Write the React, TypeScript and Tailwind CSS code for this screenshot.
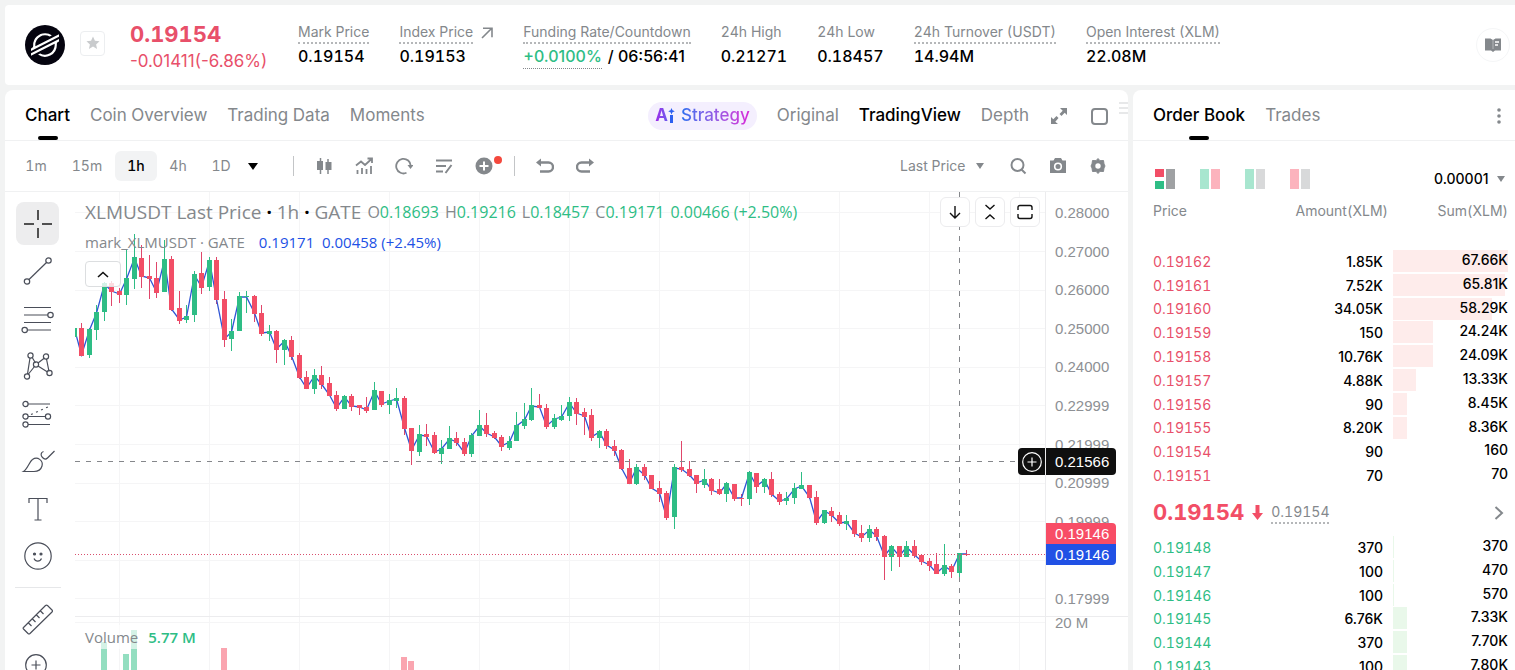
import React from "react";
import { SiStellar } from "react-icons/si";

type Candle = [string, number, number, number, number];

// [direction, body top, body bottom, wick top, wick bottom]
const candles: Candle[] = [
  ["g", 138, 147, 138, 147], ["r", 138, 166, 133, 166], ["g", 139, 165, 138, 168], ["g", 122, 140, 115, 150],
  ["g", 93, 122, 92, 131], ["r", 93, 102, 91, 116], ["r", 101, 105, 98, 113], ["g", 88, 105, 59, 115],
  ["g", 67, 89, 44, 99], ["r", 68, 87, 55, 98], ["r", 86, 89, 65, 109], ["r", 88, 103, 72, 108],
  ["g", 69, 102, 50, 102], ["r", 69, 120, 66, 121], ["r", 118, 131, 101, 134], ["g", 126, 130, 115, 133],
  ["g", 84, 125, 81, 132], ["r", 83, 98, 62, 104], ["g", 70, 97, 67, 101], ["r", 70, 110, 67, 114],
  ["r", 109, 150, 101, 157], ["g", 141, 149, 129, 161], ["g", 106, 141, 102, 141], ["g", 106, 107, 101, 123],
  ["r", 106, 124, 105, 132], ["r", 123, 144, 115, 146], ["g", 141, 144, 135, 151], ["r", 141, 160, 140, 173],
  ["g", 150, 160, 149, 175], ["r", 150, 167, 146, 170], ["r", 165, 188, 163, 189], ["r", 187, 199, 181, 199],
  ["g", 185, 199, 179, 204], ["r", 185, 195, 176, 199], ["r", 193, 206, 187, 206], ["r", 205, 219, 201, 221],
  ["g", 206, 219, 205, 219], ["r", 206, 217, 204, 221], ["r", 215, 218, 215, 225], ["r", 217, 221, 207, 223],
  ["g", 200, 220, 192, 220], ["r", 201, 215, 201, 217], ["g", 210, 215, 204, 224], ["g", 208, 211, 198, 218],
  ["r", 208, 239, 206, 245], ["r", 238, 261, 238, 275], ["g", 244, 262, 235, 266], ["r", 244, 247, 234, 256],
  ["r", 245, 263, 242, 264], ["g", 258, 264, 250, 274], ["g", 248, 259, 236, 259], ["r", 248, 253, 242, 256],
  ["r", 252, 264, 248, 266], ["g", 245, 264, 243, 267], ["g", 235, 246, 220, 246], ["r", 235, 244, 223, 247],
  ["r", 243, 248, 241, 249], ["r", 247, 257, 245, 261], ["g", 251, 258, 246, 260], ["g", 235, 251, 222, 251],
  ["g", 229, 236, 213, 239], ["g", 215, 230, 198, 231], ["r", 215, 218, 204, 218], ["r", 218, 237, 214, 239],
  ["g", 228, 237, 224, 239], ["g", 226, 230, 215, 231], ["g", 212, 226, 207, 231], ["r", 212, 224, 208, 235],
  ["r", 222, 227, 218, 245], ["r", 225, 248, 219, 251], ["g", 241, 248, 240, 258], ["r", 241, 256, 239, 259],
  ["r", 256, 261, 250, 266], ["r", 260, 279, 259, 280], ["r", 278, 294, 269, 294], ["g", 277, 294, 274, 295],
  ["r", 277, 286, 274, 290], ["r", 285, 299, 285, 299], ["r", 298, 304, 291, 312], ["r", 303, 328, 301, 330],
  ["g", 277, 327, 274, 339], ["r", 277, 280, 251, 282], ["r", 279, 286, 271, 287], ["r", 285, 294, 285, 303],
  ["g", 289, 295, 279, 298], ["r", 289, 301, 288, 305], ["r", 299, 304, 289, 305], ["g", 293, 304, 292, 312],
  ["r", 294, 309, 294, 311], ["r", 308, 309, 304, 316], ["g", 282, 309, 281, 315], ["r", 283, 297, 283, 303],
  ["g", 289, 297, 288, 303], ["r", 289, 305, 282, 307], ["r", 304, 312, 302, 315], ["g", 308, 311, 302, 315],
  ["g", 298, 308, 293, 314], ["g", 295, 299, 282, 299], ["r", 295, 308, 295, 309], ["r", 307, 333, 301, 335],
  ["g", 320, 333, 320, 334], ["r", 321, 326, 317, 332], ["r", 325, 334, 322, 336], ["g", 331, 334, 325, 340],
  ["r", 330, 344, 330, 347], ["r", 343, 348, 335, 352], ["g", 339, 348, 335, 352], ["r", 339, 347, 337, 351],
  ["r", 346, 367, 345, 390], ["g", 356, 367, 355, 381], ["r", 356, 367, 356, 377], ["g", 356, 367, 351, 367],
  ["r", 356, 366, 350, 368], ["r", 365, 372, 364, 375], ["r", 371, 376, 368, 381], ["r", 374, 384, 363, 384],
  ["g", 375, 384, 354, 386], ["r", 376, 382, 374, 388], ["g", 363, 383, 363, 389], ["r", 364, 365, 360, 366],
];

const volumes = [
  { x: 26, y: 450, up: true },
  { x: 48, y: 462, up: true },
  { x: 56, y: 438, up: true },
  { x: 146, y: 456, up: false },
  { x: 326, y: 465, up: false },
  { x: 333, y: 469, up: false },
];

const axisLabels = [
  { label: "0.28000", y: 20 },
  { label: "0.27000", y: 59 },
  { label: "0.26000", y: 97 },
  { label: "0.25000", y: 136 },
  { label: "0.24000", y: 174 },
  { label: "0.22999", y: 213 },
  { label: "0.21999", y: 252 },
  { label: "0.20999", y: 290 },
  { label: "0.19999", y: 329 },
  { label: "0.17999", y: 406 },
];

const gridY = [20, 59, 98, 136, 175, 213, 252, 291, 329, 368, 406, 430];
const gridX = [44, 134, 224, 314, 404, 494, 584, 674, 764, 854, 944];

const asks = [
  { price: "0.19162", amount: "1.85K", sum: "67.66K", depth: 100 },
  { price: "0.19161", amount: "7.52K", sum: "65.81K", depth: 97 },
  { price: "0.19160", amount: "34.05K", sum: "58.29K", depth: 86 },
  { price: "0.19159", amount: "150", sum: "24.24K", depth: 35 },
  { price: "0.19158", amount: "10.76K", sum: "24.09K", depth: 35 },
  { price: "0.19157", amount: "4.88K", sum: "13.33K", depth: 20 },
  { price: "0.19156", amount: "90", sum: "8.45K", depth: 12 },
  { price: "0.19155", amount: "8.20K", sum: "8.36K", depth: 12 },
  { price: "0.19154", amount: "90", sum: "160", depth: 0 },
  { price: "0.19151", amount: "70", sum: "70", depth: 0 },
];

const bids = [
  { price: "0.19148", amount: "370", sum: "370", depth: 1 },
  { price: "0.19147", amount: "100", sum: "470", depth: 1 },
  { price: "0.19146", amount: "100", sum: "570", depth: 1 },
  { price: "0.19145", amount: "6.76K", sum: "7.33K", depth: 12 },
  { price: "0.19144", amount: "370", sum: "7.70K", depth: 12 },
  { price: "0.19143", amount: "100", sum: "7.80K", depth: 12 },
];

const Stat = ({
  label,
  value,
  dotted,
  children,
}: {
  label: string;
  value?: string;
  dotted?: boolean;
  children?: React.ReactNode;
}) => (
  <div className="flex shrink-0 flex-col pb-0.5">
    <div className="flex h-6 items-center gap-2 text-sm text-[#84888c]">
      <span
        className={
          dotted
            ? "border-b-2 border-dotted border-[#b5b7b9] leading-5"
            : "border-b-2 border-transparent leading-5"
        }
      >
        {label}
      </span>
      {label === "Index Price" && (
        <svg width="12" height="12" viewBox="0 0 12 12" fill="none" stroke="#84888c" strokeWidth="1.6">
          <path d="M1 11L10.5 1.5M2 1.2h9v9" />
        </svg>
      )}
    </div>
    <div className="text-base font-medium leading-[22px] text-black">{value ?? children}</div>
  </div>
);

const Header = () => (
  <header className="flex h-20 shrink-0 items-center overflow-hidden rounded-l bg-white pl-5 pr-[5px]">
    <div className="flex size-10 shrink-0 items-center justify-center rounded-full bg-[#05040f]">
      <SiStellar className="size-7 text-white" />
    </div>
    <button
      aria-label="Add to favorites"
      className="mb-1 ml-[15px] flex size-[25px] shrink-0 items-center justify-center rounded border border-[#eceef0]"
    >
      <svg width="14" height="14" viewBox="0 0 24 24" fill="#c9cbcd">
        <path d="M12 1l3.3 7.3 7.9.8-5.9 5.3 1.7 7.8L12 18.1l-7 4.1 1.7-7.8L.8 9.1l7.9-.8z" />
      </svg>
    </button>
    <div className="ml-[25px] w-[138px] shrink-0 pt-1 text-[#e8506a]">
      <div className="text-[22px] font-bold leading-7">0.19154</div>
      <div className="text-[17px] leading-[26px] proportional-nums">-0.01411(-6.86%)</div>
    </div>
    <div className="ml-[30px] flex items-center gap-[30px]">
      <Stat label="Mark Price" value="0.19154" dotted />
      <Stat label="Index Price" value="0.19153" dotted />
      <Stat label="Funding Rate/Countdown" dotted>
        <span className="proportional-nums">
          <span className="border-b border-dotted border-[#84888c] pb-0.5 text-[#2ebd85]">+0.0100%</span>
          <span className="ml-1.5">/ 06:56:41</span>
        </span>
      </Stat>
      <Stat label="24h High" value="0.21271" />
      <Stat label="24h Low" value="0.18457" />
      <Stat label="24h Turnover (USDT)" value="14.94M" dotted />
      <Stat label="Open Interest (XLM)" value="22.08M" dotted />
    </div>
    <button
      aria-label="Guide"
      className="ml-auto flex size-[34px] shrink-0 items-center justify-center rounded-full border border-[#f5f6f7]"
    >
      <svg width="16" height="16" viewBox="0 0 16 16">
        <path d="M0 1.5h5.500L8 3v12l-2-1.500H0zM16 1.500h-5.500L8 3v12l2-1.500h6z" fill="#84888c" />
        <path d="M10 5h4M10 8h3" stroke="#fff" strokeWidth="1.3" />
        <path d="M8 3v9" stroke="#c3c5c7" strokeWidth="0.8" />
      </svg>
    </button>
  </header>
);

const ChartTabs = () => (
  <nav className="flex h-[51px] shrink-0 items-center border-b border-[#f0f1f2] pl-5 pt-0.5 text-[17px] text-[#84888c]">
    <div className="flex h-full items-center gap-5">
      <button className="relative h-full font-medium text-black">
        Chart
        <span className="absolute bottom-0 left-1/2 h-1 w-5 -translate-x-1/2 rounded-sm bg-black" />
      </button>
      <button>Coin Overview</button>
      <button>Trading Data</button>
      <button>Moments</button>
    </div>
    <div className="ml-auto flex h-full items-center gap-5">
      <button className="flex h-7 items-center gap-1.5 rounded-full bg-[#f4effe] px-[7px]">
        <span className="flex items-center bg-gradient-to-r from-[#a020e8] to-[#2f6bf0] bg-clip-text font-bold text-transparent">
          A
          <svg width="7" height="16" viewBox="0 0 7 16" fill="#2d5ff0">
            <path d="M2 7h3v8H2zM3.500 0l1 2.200 2.300 1-2.300 1-1 2.200-1-2.200-2.300-1 2.300-1z" />
          </svg>
        </span>
        <span className="bg-gradient-to-r from-[#1f6ef0] to-[#d822d8] bg-clip-text font-medium text-transparent">
          Strategy
        </span>
      </button>
      <button>Original</button>
      <button className="font-medium text-black">TradingView</button>
      <button>Depth</button>
      <button aria-label="Fullscreen" className="flex w-5 justify-center">
        <svg width="16" height="16" viewBox="0 0 16 16" fill="#84888c">
          <path d="M9 0h7v7l-2.300-2.300L10.500 8 8.500 6l3.200-3.300zM0 9l2.300 2.300L5.500 8l2 2-3.200 3.700L7 16H0z" />
        </svg>
      </button>
      <button aria-label="Layout" className="flex w-5 justify-center">
        <span className="size-[17px] rounded-sm border-2 border-[#84888c]" />
      </button>
      <svg className="mb-4 -ml-2.5" width="9" height="12" viewBox="0 0 9 12" stroke="#cfd1d3">
        <path d="M0 1h9M0 6h9M0 11h9" />
      </svg>
    </div>
  </nav>
);

const ToolIcon = ({ label, children }: { label: string; children: React.ReactNode }) => (
  <button aria-label={label} className="flex size-5 shrink-0 items-center justify-center">
    <svg width="18" height="18" viewBox="0 0 18 18" fill="none" stroke="#84888c" strokeWidth="2">
      {children}
    </svg>
  </button>
);

const Toolbar = () => (
  <div className="flex h-[51px] shrink-0 items-center justify-between border-b border-[#f0f1f2] pl-2.5 pr-5 text-sm text-[#84888c]">
    <div className="flex items-center">
      <button className="w-[42px]">1m</button>
      <button className="ml-[9px] w-[42px]">15m</button>
      <button className="ml-[7px] h-[30px] w-[42px] rounded-md bg-[#f2f3f4] font-medium text-black">1h</button>
      <button className="w-[42px]">4h</button>
      <button className="w-11">1D</button>
      <button aria-label="More intervals" className="flex w-5 justify-center">
        <svg width="10" height="7" viewBox="0 0 10 7">
          <path d="M0 0h10L5 7z" />
        </svg>
      </button>
      <span className="ml-[30px] h-5 w-px bg-[#c3c5c7]" />
      <div className="ml-5 flex items-center gap-5">
        <ToolIcon label="Candle style">
          <path d="M5.500 1v16M13 2v15" strokeWidth="1.500" />
          <path d="M2 4h6v9H2zM10.500 5h6v8h-6z" fill="#84888c" stroke="none" />
        </ToolIcon>
        <ToolIcon label="Indicators">
          <path d="M1 8.500l5-4 4 3.500 6.500-6M12.500 1.500H17V6" strokeWidth="1.800" />
          <path d="M2.500 13v4M7 11v6M11.500 12v5M16 9v8" strokeWidth="1.800" />
        </ToolIcon>
        <ToolIcon label="Replay">
          <path d="M11.500 15.800A7.300 7.300 0 1 1 15.800 9" strokeWidth="1.800" />
          <path d="M12.500 8h6l-3 4z" fill="#84888c" stroke="none" />
        </ToolIcon>
        <ToolIcon label="Order list">
          <path d="M1 3.500h16M1 9h10M1 14.500h7M10.500 16L16.500 8" />
        </ToolIcon>
        <div className="relative flex">
          <ToolIcon label="Add">
            <circle cx="9" cy="9" r="8.500" fill="#84888c" stroke="none" />
            <path d="M9 4.500v9M4.500 9h9" stroke="#fff" />
          </ToolIcon>
          <span className="absolute -right-2 top-0 size-2 rounded-full bg-[#f4483d]" />
        </div>
      </div>
      <span className="ml-5 h-5 w-px bg-[#c3c5c7]" />
      <div className="ml-5 flex items-center gap-5">
        <ToolIcon label="Undo">
          <path d="M3 5.500h9.500a4 4 0 0 1 0 9H4" strokeWidth="2.400" />
          <path d="M0 5.500L5 1.500v8z" fill="#84888c" stroke="none" />
        </ToolIcon>
        <ToolIcon label="Redo">
          <path d="M15 5.500H5.500a4 4 0 0 0 0 9H14" strokeWidth="2.400" />
          <path d="M18 5.500l-5-4v8z" fill="#84888c" stroke="none" />
        </ToolIcon>
      </div>
    </div>
    <div className="flex items-center gap-5">
      <label className="mr-1 flex items-center gap-1">
        <select aria-label="Price type" className="appearance-none bg-transparent outline-none">
          <option>Last Price</option>
          <option>Mark Price</option>
        </select>
        <svg width="8" height="6" viewBox="0 0 8 6" fill="#84888c">
          <path d="M0 0h8L4 6z" />
        </svg>
      </label>
      <ToolIcon label="Search">
        <circle cx="8.500" cy="8" r="6" />
        <path d="M12.500 12.500l4 4" />
      </ToolIcon>
      <ToolIcon label="Snapshot">
        <path d="M6 1h6l1.500 2.500H17V16H1V3.500h3.500z" fill="#84888c" stroke="none" />
        <circle cx="9" cy="9.500" r="3.300" stroke="#fff" strokeWidth="1.600" />
      </ToolIcon>
      <ToolIcon label="Settings">
        <path
          d="M9 1.500l2 2.200 3.500-.2.500 3.500L16 9l-1 2-.5 3.500-3.500-.2L9 16.500l-2-2.200-3.500.2L3 11 2 9l1-2 .5-3.500 3.500.2z"
          fill="#84888c"
          strokeWidth="1"
          strokeLinejoin="round"
        />
        <circle cx="9" cy="9" r="2.700" fill="#fff" stroke="none" />
      </ToolIcon>
    </div>
  </div>
);

const drawingTools = [
  {
    name: "Crosshair",
    icon: <path d="M16 2v10M16 20v10M2 16h10M20 16h10" strokeWidth="1.500" stroke="#1c1c1c" />,
  },
  {
    name: "Trend line",
    icon: (
      <>
        <circle cx="26.500" cy="5.500" r="2.700" />
        <circle cx="5" cy="26.500" r="2.700" />
        <path d="M7 24.500L24.500 7.500" />
      </>
    ),
  },
  {
    name: "Fib retracement",
    icon: (
      <>
        <path d="M2 4.500h27M2 12h24M2 19.500h27M5.500 27H29" />
        <circle cx="28.500" cy="12" r="2.700" />
        <circle cx="2.700" cy="27" r="2.700" />
      </>
    ),
  },
  {
    name: "Patterns",
    icon: (
      <>
        <path d="M8 8L5.500 24M10.500 8l3 5M16 13l6.500-5M24.500 9l2.500 12.500M6.500 24l6-7.500M16 16l9.500 6" />
        <circle cx="8.500" cy="5.500" r="2.600" />
        <circle cx="24" cy="6.500" r="2.600" />
        <circle cx="14" cy="14.500" r="2.600" />
        <circle cx="5" cy="26.500" r="2.600" />
        <circle cx="27.500" cy="23" r="2.600" />
      </>
    ),
  },
  {
    name: "Projection",
    icon: (
      <>
        <path d="M6 6h22M6 18.500h17M6 26.500h22" />
        <path d="M9 16.500L28 8" strokeDasharray="2 3.500" />
        <circle cx="3.500" cy="6" r="2.600" />
        <circle cx="3.500" cy="18.500" r="2.600" />
        <circle cx="26" cy="18.500" r="2.600" />
        <circle cx="3.500" cy="26.500" r="2.600" />
      </>
    ),
  },
  {
    name: "Brush",
    icon: (
      <path d="M1.500 26.500c4-2.500 6-10 9-12 5-3.500 11 1 9.500 6.500-1 3.500-4 5.500-8 5.500zM21.500 6.500c-3 1-3 4-1 6s3.500 2 5 .5l7-7" />
    ),
  },
  {
    name: "Text",
    icon: <path d="M7 10V5.500h18V10M16 5.500V27M12.500 27h7" />,
  },
  {
    name: "Emoji",
    icon: (
      <>
        <circle cx="16" cy="16" r="13.200" />
        <path d="M12 18.500c1.500 3.500 6 3.500 7.500 0" />
        <circle cx="12.500" cy="14" r="1" fill="#4a4e59" />
        <circle cx="19" cy="14" r="1" fill="#4a4e59" />
      </>
    ),
  },
];

const DrawingTools = () => (
  <aside className="flex w-[70px] shrink-0 flex-col items-center overflow-hidden pr-[5px] pt-2.5">
    <div className="flex h-[376px] shrink-0 flex-col justify-between">
      {drawingTools.map((tool) => (
        <button
          key={tool.name}
          aria-label={tool.name}
          className={
            tool.name === "Crosshair"
              ? "flex size-[43px] items-center justify-center rounded-lg bg-[#ededee]"
              : "flex size-[43px] items-center justify-center"
          }
        >
          <svg className="overflow-visible" width="32" height="32" viewBox="0 0 32 32" fill="none" stroke="#4a4e59" strokeWidth="1.200">
            {tool.icon}
          </svg>
        </button>
      ))}
    </div>
    <hr className="my-[9px] w-[46px] border-[#e6e7e9]" />
    <button aria-label="Measure" className="flex size-[43px] shrink-0 items-center justify-center">
      <svg width="32" height="32" viewBox="0 0 32 32" fill="none" stroke="#4a4e59" strokeWidth="1.200">
        <path d="M1.500 24.500L23.500 2.500q1-.8 2 0l4.500 4.500q1 1 0 2L8 30.500q-1 .8-2 0L1.500 26q-.8-.8 0-1.500zM6.500 20l3 3M10.500 16l3 3M14.500 12l3 3M18.500 8l3 3" />
      </svg>
    </button>
    <button aria-label="Zoom in" className="flex size-[43px] shrink-0 items-center justify-center">
      <svg width="32" height="32" viewBox="0 0 32 32" fill="none" stroke="#4a4e59" strokeWidth="1.200">
        <circle cx="14" cy="19" r="10.300" />
        <path d="M14 14.500v9M9.500 19h9M22 26l6 6" />
      </svg>
    </button>
  </aside>
);

const candleX = (i: number) => Math.floor(i * 7.5 - 1);

// green candles close at the body top, red ones at the bottom
const closeLine = candles
  .map(([dir, top, bottom], i) => `${candleX(i) + 0.5},${dir === "g" ? top - 1 : bottom - 3}`)
  .join(" ");

const PricePlot = () => (
  <svg className="absolute inset-0 h-full w-full" shapeRendering="crispEdges">
    <g stroke="#f5f5f6">
      {gridY.map((y) => (
        <line key={y} x1="0" x2="100%" y1={y + 0.5} y2={y + 0.5} />
      ))}
      {gridX.map((x) => (
        <line key={x} x1={x + 0.5} x2={x + 0.5} y1="0" y2="100%" />
      ))}
    </g>
    <line x1="0" x2="100%" y1="424.5" y2="424.5" stroke="#ececee" />
    {volumes.map((v) => (
      <rect key={v.x} x={v.x} y={v.y} width="6" height="200" fill={v.up ? "#93dec0" : "#faa5b0"} />
    ))}
    {candles.map(([dir, , , high, low], i) => (
      <rect
        key={i}
        x={candleX(i)}
        y={high - 2}
        width="1"
        height={low - high}
        fill={dir === "g" ? "#2ebd85" : "#e0466a"}
      />
    ))}
    <polyline
      points={closeLine}
      fill="none"
      stroke="#2f55d4"
      strokeWidth="1.300"
      shapeRendering="geometricPrecision"
    />
    {/* bodies come last, so that the line only shows between them */}
    {candles.map(([dir, top, bottom], i) => (
      <rect
        key={i}
        x={candleX(i) - 2}
        y={top - 2}
        width="5"
        height={bottom - top}
        fill={dir === "g" ? "#2ebd85" : "#f24e66"}
      />
    ))}
    <line x1="0" x2="100%" y1="362.5" y2="362.5" stroke="#d9506e" strokeDasharray="1 2" />
    <line x1="0" x2="100%" y1="269.5" y2="269.5" stroke="#85878b" strokeDasharray="5 6" />
    <line x1="884.5" x2="884.5" y1="0" y2="100%" stroke="#85878b" strokeDasharray="5 6" />
  </svg>
);

const Ohlc = ({ name, value }: { name: string; value: string }) => (
  <span className="text-[#84888c]">
    {name}
    <span className="text-[#2ebd85]">{value}</span>
  </span>
);

const ChartButton = ({ label, children }: { label: string; children: React.ReactNode }) => (
  <button
    aria-label={label}
    className="flex size-[30px] items-center justify-center rounded-md border border-[#ececee] bg-white"
  >
    <svg width="16" height="16" viewBox="0 0 16 16" fill="none" stroke="#111" strokeWidth="1.400">
      {children}
    </svg>
  </button>
);

const ChartArea = () => (
  <div className="flex min-h-0 flex-1">
    <DrawingTools />
    <div className="relative min-w-0 flex-1 overflow-hidden">
      <PricePlot />
      <div className="absolute left-2.5 top-[7px] font-['Open_Sans',sans-serif] text-[#84888c]">
        <div className="flex items-center gap-1.5 leading-[26px]">
          <h1 className="text-[19px] leading-[26px]">
            XLMUSDT Last Price <b className="text-black">·</b> 1h <b className="text-black">·</b> GATE
          </h1>
          <div className="flex gap-1.5 text-base leading-[26px]">
            <Ohlc name="O" value="0.18693" />
            <Ohlc name="H" value="0.19216" />
            <Ohlc name="L" value="0.18457" />
            <Ohlc name="C" value="0.19171" />
            <span className="text-[#2ebd85]">0.00466 (+2.50%)</span>
          </div>
        </div>
        <div className="mt-1 flex gap-3.5 text-[15px] leading-[26px]">
          <span>mark_XLMUSDT · GATE</span>
          <span className="text-[#2151e5]">0.19171&nbsp; 0.00458 (+2.45%)</span>
        </div>
        <button
          aria-label="Collapse legend"
          className="mt-1.5 flex h-[26px] w-9 items-center justify-center rounded border border-[#dcdee0] bg-white/80"
        >
          <svg width="12" height="7" viewBox="0 0 12 7" fill="none" stroke="#111" strokeWidth="1.600">
            <path d="M1 6l5-4.500L11 6" />
          </svg>
        </button>
      </div>
      <div className="absolute right-[5px] top-[5px] flex gap-[5px]">
        <ChartButton label="Scroll to latest">
          <path d="M8 2v11.500M3 9l5 5 5-5" />
        </ChartButton>
        <ChartButton label="Collapse pane">
          <path d="M3.500 1l4.500 4 4.500-4M3.500 15L8 11l4.500 4" />
        </ChartButton>
        <ChartButton label="Maximize pane">
          <path d="M1 6V3.500Q1 1.500 3 1.500h10q2 0 2 2V6M1 10v2.500q0 2 2 2h10q2 0 2-2V10" />
        </ChartButton>
      </div>
      <div className="absolute left-2.5 top-[433px] flex gap-2.5 bg-white/60 font-['Open_Sans',sans-serif] text-[15px] leading-6 text-[#84888c]">
        <span>Volume</span>
        <span className="font-semibold text-[#2ebd85]">5.77 M</span>
      </div>
      <button
        aria-label="Add alert"
        className="absolute right-0 top-64 flex h-[27px] w-[27px] items-center justify-center rounded-l bg-[#0f0f0f]"
      >
        <svg width="20" height="20" viewBox="0 0 20 20" fill="none" stroke="#fff" strokeWidth="1.200">
          <circle cx="10" cy="10" r="9.300" />
          <path d="M10 5.500v9M5.500 10h9" />
        </svg>
      </button>
    </div>
    <div className="relative w-[83px] shrink-0 overflow-hidden border-l border-[#ececee] font-['Liberation_Sans',sans-serif] text-[15px]">
      <svg className="absolute inset-0 h-full w-full">
        <g fill="#8d9094">
          {axisLabels.map((tick) => (
            <text key={tick.label} x="9" y={tick.y + 6}>
              {tick.label}
            </text>
          ))}
          <text x="9" y="436">20 M</text>
        </g>
        <line x1="0" x2="100%" y1="424.5" y2="424.5" stroke="#ececee" />
      </svg>
      <div className="absolute left-0 top-64 h-[27px] w-[70px] rounded-r bg-[#0f0f0f] pl-[9px] leading-[27px] text-white">
        0.21566
      </div>
      <div className="absolute left-0 top-[331px] h-[21px] w-[70px] rounded-tr bg-[#f84d66] pl-[9px] leading-[21px] text-white">
        0.19146
      </div>
      <div className="absolute left-0 top-[352px] h-[21px] w-[70px] rounded-br bg-[#2151e5] pl-[9px] leading-[21px] text-white">
        0.19146
      </div>
    </div>
  </div>
);

const BookRow = ({ row, side }: { row: (typeof asks)[number]; side: "ask" | "bid" }) => (
  <tr className="proportional-nums">
    <td className={side === "ask" ? "tabular-nums text-[#e8506a]" : "tabular-nums text-[#2ebd85]"}>{row.price}</td>
    <td className="pr-2.5 text-right font-medium text-black">{row.amount}</td>
    <td className="relative w-[115px] text-right align-top font-medium leading-5 text-black">
      <span
        className={side === "ask" ? "absolute left-0 top-0 h-[22px] bg-[#feeceb]" : "absolute left-0 top-0 h-[22px] bg-[#e9f8ea]"}
        style={{ width: `${row.depth}%` }}
      />
      <span className="relative">{row.sum}</span>
    </td>
  </tr>
);

const OrderBook = () => (
  <section className="flex w-[382px] shrink-0 flex-col overflow-hidden rounded-tl-lg bg-white">
    <nav className="flex h-[51px] shrink-0 items-center gap-5 border-b border-[#f0f1f2] pl-5 pr-[11px] pt-0.5 text-[17px] text-[#84888c]">
      <button className="relative h-full font-medium text-black">
        Order Book
        <span className="absolute bottom-0 left-1/2 h-1 w-5 -translate-x-1/2 rounded-sm bg-black" />
      </button>
      <button>Trades</button>
      <button aria-label="More" className="ml-auto">
        <svg width="10" height="18" viewBox="0 0 10 18" fill="#84888c">
          <circle cx="5" cy="3" r="1.800" />
          <circle cx="5" cy="9" r="1.800" />
          <circle cx="5" cy="15" r="1.800" />
        </svg>
      </button>
    </nav>
    <div className="mt-[25px] flex h-[26px] shrink-0 items-center pl-[22px] pr-2.5">
      <div className="flex gap-[25px]">
        <button aria-label="Bids and asks" className="flex gap-0.5">
          <span className="flex flex-col gap-1">
            <span className="h-2 w-[9px] bg-[#f24e66]" />
            <span className="h-2 w-[9px] bg-[#2ebd85]" />
          </span>
          <span className="h-5 w-[9px] bg-[#9fa1a3]" />
        </button>
        <button aria-label="Side by side" className="flex gap-0.5">
          <span className="h-5 w-[9px] bg-[#a8e6cf]" />
          <span className="h-5 w-[9px] bg-[#fcb3bd]" />
        </button>
        <button aria-label="Bids" className="flex gap-0.5">
          <span className="h-5 w-[9px] bg-[#a8e6cf]" />
          <span className="h-5 w-[9px] bg-[#d8d9da]" />
        </button>
        <button aria-label="Asks" className="flex gap-0.5">
          <span className="h-5 w-[9px] bg-[#fcb3bd]" />
          <span className="h-5 w-[9px] bg-[#d8d9da]" />
        </button>
      </div>
      <label className="ml-auto flex items-center gap-2 text-sm font-medium text-black">
        <select
          aria-label="Price precision"
          className="appearance-none bg-transparent outline-none proportional-nums"
        >
          <option>0.00001</option>
          <option>0.0001</option>
        </select>
        <svg width="8" height="6" viewBox="0 0 8 6" fill="#84888c">
          <path d="M0 0h8L4 6z" />
        </svg>
      </label>
    </div>
    <div className="flex flex-col pl-5 pr-[7px] text-sm">
      <table className="mt-[7px] h-[289px] w-full">
        <thead>
          <tr className="h-[51px] align-top leading-6 text-[#84888c]">
            <th className="text-left font-normal">Price</th>
            <th className="pr-[5px] text-right font-normal">Amount(XLM)</th>
            <th className="text-right font-normal">Sum(XLM)</th>
          </tr>
        </thead>
        <tbody>
          {asks.map((row) => (
            <BookRow key={row.price} row={row} side="ask" />
          ))}
        </tbody>
      </table>
      <div className="flex h-12 shrink-0 items-center pt-0.5">
        <span className="text-[22px] font-bold text-[#f24e66]">0.19154</span>
        <svg className="ml-2" width="11" height="16" viewBox="0 0 11 16" fill="#f24e66">
          <path d="M3.500 0h4v8H11l-5.500 7L0 8h3.500z" />
        </svg>
        <span className="ml-2 border-b-2 border-dotted border-[#b5b7b9] leading-5 text-[#84888c]">0.19154</span>
        <button aria-label="Show trades" className="ml-auto mr-1">
          <svg width="10" height="14" viewBox="0 0 10 14" fill="none" stroke="#84888c" strokeWidth="2">
            <path d="M1.500 1l6.500 6-6.500 6" />
          </svg>
        </button>
      </div>
      <table className="h-[143px] w-full">
        <tbody>
          {bids.map((row) => (
            <BookRow key={row.price} row={row} side="bid" />
          ))}
        </tbody>
      </table>
    </div>
  </section>
);

const App = () => {
  return (
    <div className="flex h-screen flex-col gap-[5px] overflow-hidden bg-[#f2f3f3] pl-[5px] pt-[5px] font-['Inter',sans-serif] tabular-nums">
      <Header />
      <main className="flex min-h-0 flex-1 gap-[5px]">
        <section className="flex min-w-0 flex-1 flex-col overflow-hidden rounded-t-lg bg-white">
          <ChartTabs />
          <Toolbar />
          <ChartArea />
        </section>
        <OrderBook />
      </main>
    </div>
  );
};

export default App;
